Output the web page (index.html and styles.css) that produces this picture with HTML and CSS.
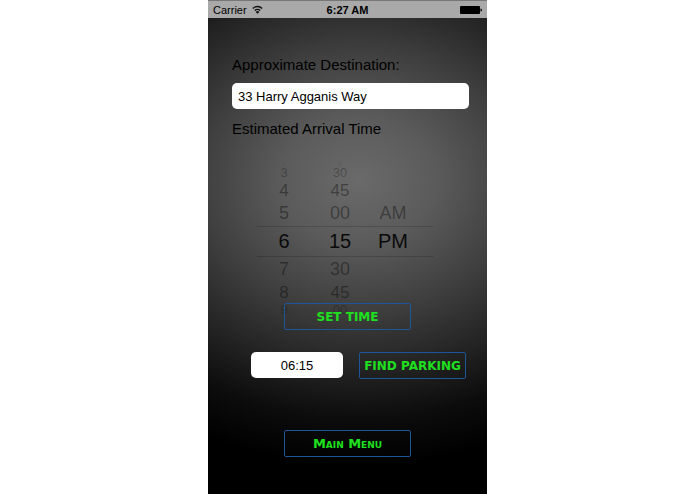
FILE: index.html
```
<!DOCTYPE html>
<html lang="en">
<head>
    <meta charset="UTF-8">
    <meta name="viewport" content="width=device-width, initial-scale=1.0">
    <title>Find Parking</title>
    <link rel="stylesheet" href="styles.css">
</head>
<body>
    <div class="phone">
        <header class="status-bar">
            <div class="carrier">
                <span>Carrier</span>
                <svg class="wifi-icon" viewBox="0 0 20 16" aria-hidden="true">
                    <path d="M1.5 6a12 12 0 0 1 17 0M5 10a7.2 7.2 0 0 1 10 0" fill="none" stroke="#111" stroke-width="2.6"/>
                    <path d="M10 15.8 6.6 12.4a4.8 4.8 0 0 1 6.8 0z" fill="#111"/>
                </svg>
            </div>
            <div class="clock">6:27 AM</div>
            <div class="battery">
                <svg class="battery-icon" viewBox="0 0 22 8" aria-hidden="true">
                    <rect x="0" y="0" width="20" height="8" rx="1" fill="#000"/>
                    <path d="M20.5 2.5a1.5 1.5 0 0 1 0 3z" fill="#000"/>
                </svg>
            </div>
        </header>

        <main class="screen">
            <form class="parking-form">
                <label class="form-label" for="destination">Approximate Destination:</label>
                <input class="text-field" type="text" id="destination" value="33 Harry Agganis Way">

                <div class="form-label" id="arrival-label">Estimated Arrival Time</div>
                <div class="picker" role="group" aria-labelledby="arrival-label">
                    <div class="picker-row edge"><span>2</span><span>15</span></div>
                    <div class="picker-row far"><span>3</span><span>30</span></div>
                    <div class="picker-row middle"><span>4</span><span>45</span></div>
                    <div class="picker-row near"><span>5</span><span>00</span><span>AM</span></div>
                    <div class="picker-row selected"><span>6</span><span>15</span><span>PM</span></div>
                    <div class="picker-row near"><span>7</span><span>30</span></div>
                    <div class="picker-row middle"><span>8</span><span>45</span></div>
                    <div class="picker-row far"><span>9</span><span>00</span></div>
                </div>
                <button class="btn btn-wide set-time" type="button">SET TIME</button>

                <div class="find-row">
                    <input class="text-field time-field" type="text" value="06:15" aria-label="Arrival time">
                    <button class="btn btn-find" type="submit">FIND PARKING</button>
                </div>

                <button class="btn btn-wide main-menu" type="button">Main Menu</button>
            </form>
        </main>
    </div>
</body>
</html>
```
FILE: styles.css
```
* {
    margin: 0;
    padding: 0;
    box-sizing: border-box;
}

body {
    background-color: #fff;
    font-family: "Liberation Sans", Arial, sans-serif;
    color: #000;
}

.phone {
    display: flex;
    flex-direction: column;
    max-width: 279px;
    min-height: 100vh;
    margin: 0 auto;
    background: radial-gradient(350px 285px at 54% 180px, #6a6a6a 0%, #5b5b5b 22%, #3e3e3e 46%, #292929 62%, #0c0c0c 84%, #000 100%);
}

.status-bar {
    display: grid;
    grid-template-columns: 1fr auto 1fr;
    align-items: center;
    height: 18px;
    padding: 0 5px;
    background-color: #a9a9a9;
    border-top: 1px solid #777;
    font-size: 11px;
}

.carrier {
    display: flex;
    align-items: center;
    gap: 5px;
}

.wifi-icon {
    width: 11px;
    height: 9px;
}

.clock {
    font-weight: bold;
}

.battery {
    display: flex;
    justify-content: flex-end;
}

.battery-icon {
    width: 22px;
    height: 8px;
}

.screen {
    padding: 37px 24px 38px;
}

.parking-form {
    display: flex;
    flex-direction: column;
}

.form-label {
    font-size: 15px;
    line-height: 20px;
}

.text-field {
    height: 26px;
    padding: 0 6px;
    border: none;
    border-radius: 5px;
    background-color: #fff;
    font-family: inherit;
    font-size: 13px;
    color: #000;
}

#destination {
    margin: 8px -6px 10px 0;
}

/* time wheel: rows shrink and fade away from the selected one */
.picker {
    align-self: center;
    width: 176px;
    margin: 23px 5px 0 0;
}

.picker-row {
    display: grid;
    grid-template-columns: 54px 58px 48px;
    align-items: center;
    text-align: center;
}

.picker-row.edge {
    height: 4px;
    font-size: 4px;
    line-height: 4px;
    color: rgba(0, 0, 0, 0.2);
}

.picker-row.far {
    height: 14px;
    font-size: 13px;
    line-height: 14px;
    color: rgba(0, 0, 0, 0.28);
}

.picker-row.middle {
    height: 21px;
    font-size: 17px;
    line-height: 21px;
    color: rgba(0, 0, 0, 0.38);
}

.picker-row.near {
    height: 25px;
    font-size: 18px;
    line-height: 25px;
    color: rgba(0, 0, 0, 0.38);
}

.picker-row.selected {
    height: 31px;
    border-top: 1px solid rgba(0, 0, 0, 0.16);
    border-bottom: 1px solid rgba(0, 0, 0, 0.16);
    font-size: 20px;
    line-height: 29px;
    color: #0a0a0a;
}

.btn {
    height: 27px;
    border: 1px solid #1d5598;
    border-radius: 2px;
    background: transparent;
    font-family: "DejaVu Sans", Verdana, sans-serif;
    font-size: 12px;
    font-weight: bold;
    color: #1fe01f;
    cursor: pointer;
}

.btn-wide {
    align-self: center;
    width: 127px;
}

/* overlaps the bottom of the wheel */
.set-time {
    margin-top: -14px;
}

.find-row {
    display: flex;
    justify-content: flex-end;
    gap: 16px;
    margin: 22px -3px 0 0;
}

.time-field {
    width: 92px;
    text-align: center;
}

.btn-find {
    width: 107px;
}

.main-menu {
    margin-top: 51px;
    font-size: 13px;
    font-variant: small-caps;
}
```
